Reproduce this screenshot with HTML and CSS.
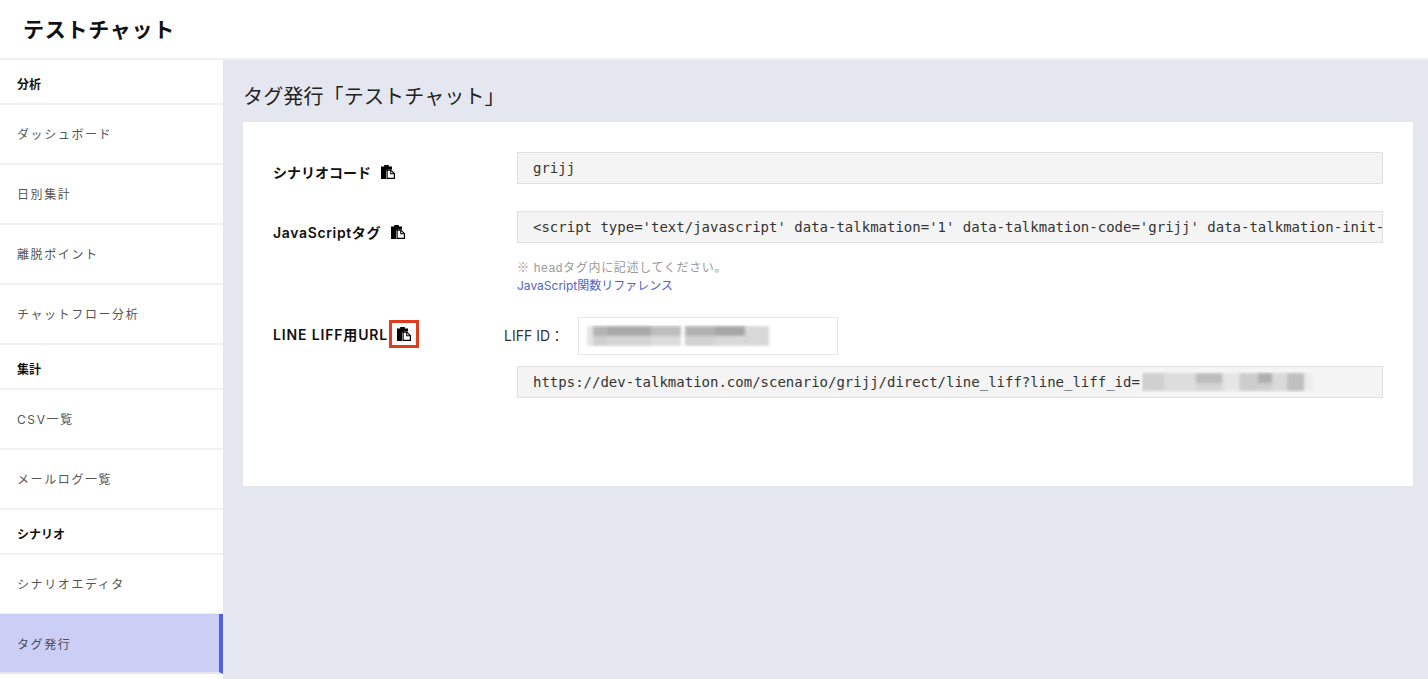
FILE: index.html
```html
<!DOCTYPE html>
<html lang="ja">
<head>
<meta charset="utf-8">
<title>タグ発行</title>
<link rel="stylesheet" href="styles.css">
</head>
<body>
<svg class="defs" width="0" height="0" aria-hidden="true">
  <symbol id="copy" viewBox="0 0 14 14">
    <path fill="#000" d="M0 1.5h3.2V0h4.6v1.5H11v3H6.6L5 6.1V14H0z"/>
    <path fill="#fff" stroke="#000" stroke-width="1.2" d="M6.1 5.1h3.7l3.6 3.6v4.7H6.1z"/>
    <path fill="#000" d="M9.2 5h1v3.2h3.5v1H9.2z"/>
  </symbol>
  <filter id="mosaic" x="-5%" y="-20%" width="110%" height="140%"><feGaussianBlur stdDeviation="1.6"/></filter>
</svg>
<header class="topbar"><h1 class="app-title">テストチャット</h1></header>
<div class="layout">
  <nav class="sidebar">
    <div class="nav-head">分析</div>
    <a class="nav-item">ダッシュボード</a>
    <a class="nav-item">日別集計</a>
    <a class="nav-item">離脱ポイント</a>
    <a class="nav-item">チャットフロー分析</a>
    <div class="nav-head">集計</div>
    <a class="nav-item">CSV一覧</a>
    <a class="nav-item">メールログ一覧</a>
    <div class="nav-head">シナリオ</div>
    <a class="nav-item">シナリオエディタ</a>
    <a class="nav-item is-active">タグ発行</a>
  </nav>
  <main class="main">
    <h2 class="page-title">タグ発行「テストチャット」</h2>
    <section class="card">
      <div class="row">
        <div class="label">シナリオコード<svg class="icon icon-gap"><use href="#copy"/></svg></div>
        <div class="value"><div class="code">grijj</div></div>
      </div>
      <div class="row row-js">
        <div class="label label-js">JavaScriptタグ<svg class="icon icon-gap"><use href="#copy"/></svg></div>
        <div class="value">
          <div class="code">&lt;script type='text/javascript' data-talkmation='1' data-talkmation-code='grijj' data-talkmation-init-scenario='true' src='https://dev-talkmation.com/embed.js'&gt;&lt;/script&gt;</div>
          <p class="hint">※ headタグ内に記述してください。</p>
          <a class="ref-link">JavaScript関数リファレンス</a>
        </div>
      </div>
      <div class="row row-liff">
        <div class="label label-liff">LINE LIFF用URL<span class="marked"><svg class="icon"><use href="#copy"/></svg></span></div>
        <div class="value value-liff">
          <div class="liff-line">
            <span class="liff-label">LIFF ID：</span>
            <div class="liff-input">
              <svg class="mosaic" width="196" height="22" viewBox="0 0 196 22" aria-hidden="true">
                <g filter="url(#mosaic)">
                  <rect x="8" y="1" width="6" height="20" fill="#e4e4e4"/>
                  <rect x="14" y="1" width="14" height="10" fill="#b4b4b4"/>
                  <rect x="14" y="11" width="14" height="10" fill="#cfcfcf"/>
                  <rect x="28" y="1" width="44" height="10" fill="#a9a9a9"/>
                  <rect x="28" y="11" width="44" height="10" fill="#d6d6d6"/>
                  <rect x="72" y="1" width="30" height="10" fill="#bdbdbd"/>
                  <rect x="72" y="11" width="30" height="10" fill="#dcdcdc"/>
                  <rect x="106" y="1" width="30" height="10" fill="#b2b2b2"/>
                  <rect x="106" y="11" width="30" height="10" fill="#d2d2d2"/>
                  <rect x="136" y="1" width="30" height="10" fill="#a6a6a6"/>
                  <rect x="136" y="11" width="30" height="10" fill="#d9d9d9"/>
                  <rect x="166" y="1" width="24" height="20" fill="#d8d8d8"/>
                </g>
              </svg>
            </div>
          </div>
          <div class="code code-flex">https://dev-talkmation.com/scenario/grijj/direct/line_liff?line_liff_id=<svg class="mosaic mosaic-url" width="176" height="20" viewBox="0 0 170 20" preserveAspectRatio="none" aria-hidden="true">
              <g filter="url(#mosaic)">
                <rect x="0" y="1" width="22" height="18" fill="#d0d0d0"/>
                <rect x="22" y="1" width="30" height="18" fill="#dddddd"/>
                <rect x="52" y="1" width="26" height="10" fill="#bdbdbd"/>
                <rect x="52" y="11" width="26" height="8" fill="#d4d4d4"/>
                <rect x="78" y="1" width="16" height="18" fill="#e6e6e6"/>
                <rect x="94" y="1" width="18" height="18" fill="#cdcdcd"/>
                <rect x="112" y="1" width="14" height="10" fill="#aeaeae"/>
                <rect x="112" y="11" width="14" height="8" fill="#cfcfcf"/>
                <rect x="126" y="1" width="14" height="18" fill="#dadada"/>
                <rect x="140" y="1" width="17" height="18" fill="#c0c0c0"/>
                <rect x="157" y="1" width="8" height="18" fill="#ececec"/>
              </g>
            </svg></div>
        </div>
      </div>
    </section>
  </main>
</div>
</body>
</html>
```
FILE: styles.css
```css
* { box-sizing: border-box; }

html, body {
  margin: 0;
  height: 100%;
  overflow: hidden;
}

body {
  font-family: "Inter", "Noto Sans CJK JP", sans-serif;
  color: #111;
  background: #fff;
  display: flex;
  flex-direction: column;
}

.defs { position: absolute; }

.topbar {
  height: 60px;
  flex: none;
  padding-left: 23px;
  display: flex;
  align-items: center;
  background: #fff;
  border-bottom: 2px solid #eef0f4;
}

.app-title {
  margin: 0;
  font-size: 21px;
  font-weight: 700;
  letter-spacing: 0.75px;
  line-height: 1;
}

.layout {
  flex: 1;
  display: flex;
  min-height: 0;
}

.sidebar {
  width: 223px;
  flex: none;
  background: #fff;
  display: flex;
  flex-direction: column;
}

.nav-head {
  height: 45px;
  flex: none;
  padding: 4px 0 0 17px;
  display: flex;
  align-items: center;
  font-size: 12px;
  font-weight: 700;
  color: #111;
  border-bottom: 2px solid #f0f1f5;
}

.nav-item {
  height: 60px;
  flex: none;
  padding: 0 0 2px 17px;
  display: flex;
  align-items: center;
  font-size: 12px;
  letter-spacing: 1.6px;
  color: #555;
  border-bottom: 2px solid #f0f1f5;
}

.is-active {
  margin-top: -1px;
  padding-bottom: 0;
  background: #cccff5;
  color: #4a4a5a;
  border-bottom-color: #e4e7f0;
  border-right: 4px solid #5360e0;
}

.main {
  flex: 1;
  background: #e4e7f0;
  padding: 0 15px 0 20px;
  min-width: 0;
}

.page-title {
  margin: 0;
  height: 62px;
  display: flex;
  align-items: center;
  padding-top: 8px;
  font-size: 20px;
  font-weight: 400;
  letter-spacing: 0.15px;
  color: #222;
}

.card {
  background: #fff;
  height: 364px;
  padding: 30px 30px 0;
}

.row {
  display: grid;
  grid-template-columns: 244px 1fr;
}

.row-js { margin-top: 27px; }
.row-liff { margin-top: 22px; }

.label {
  font-size: 14px;
  font-weight: 600;
  color: #111;
  display: flex;
  align-items: center;
  height: 32px;
  padding-top: 8px;
}

.label-js {
  letter-spacing: 0.65px;
  padding-top: 9px;
}

.label-liff {
  height: 38px;
  padding: 0 0 4px;
  letter-spacing: 0.85px;
}

.icon {
  width: 14px;
  height: 14px;
  flex: none;
  display: block;
}

.icon-gap { margin-left: 10px; }

.marked {
  display: flex;
  align-items: center;
  justify-content: center;
  width: 30px;
  height: 28px;
  margin-left: 1px;
  border: 3px solid #e33b1f;
}

.value { min-width: 0; }

.code {
  height: 32px;
  padding: 0 15px;
  line-height: 30px;
  background: #f4f4f4;
  border: 1px solid #e0e0e0;
  font-family: "DejaVu Sans Mono", monospace;
  font-size: 14px;
  color: #333;
  white-space: nowrap;
  overflow: hidden;
}

.code-flex {
  display: flex;
  align-items: center;
}

.hint {
  margin: 16px 0 0;
  font-family: "Liberation Sans", "Noto Sans CJK JP", sans-serif;
  font-size: 12px;
  letter-spacing: 0.68px;
  line-height: 18px;
  color: #9a9a9a;
}

.ref-link {
  display: block;
  font-size: 12px;
  line-height: 18px;
  color: #4f63c9;
}

.value-liff { margin-left: -13px; }

.liff-line {
  display: flex;
  align-items: center;
}

.liff-label {
  font-size: 14px;
  color: #333;
  width: 74px;
  flex: none;
  padding-bottom: 3px;
}

.liff-input {
  width: 260px;
  height: 38px;
  background: #fff;
  border: 1px solid #e6e6e6;
  display: flex;
  align-items: center;
}

.value-liff .code {
  margin: 11px 0 0 13px;
}

.mosaic { flex: none; display: block; }
.mosaic-url { margin-left: 2px; }
```
